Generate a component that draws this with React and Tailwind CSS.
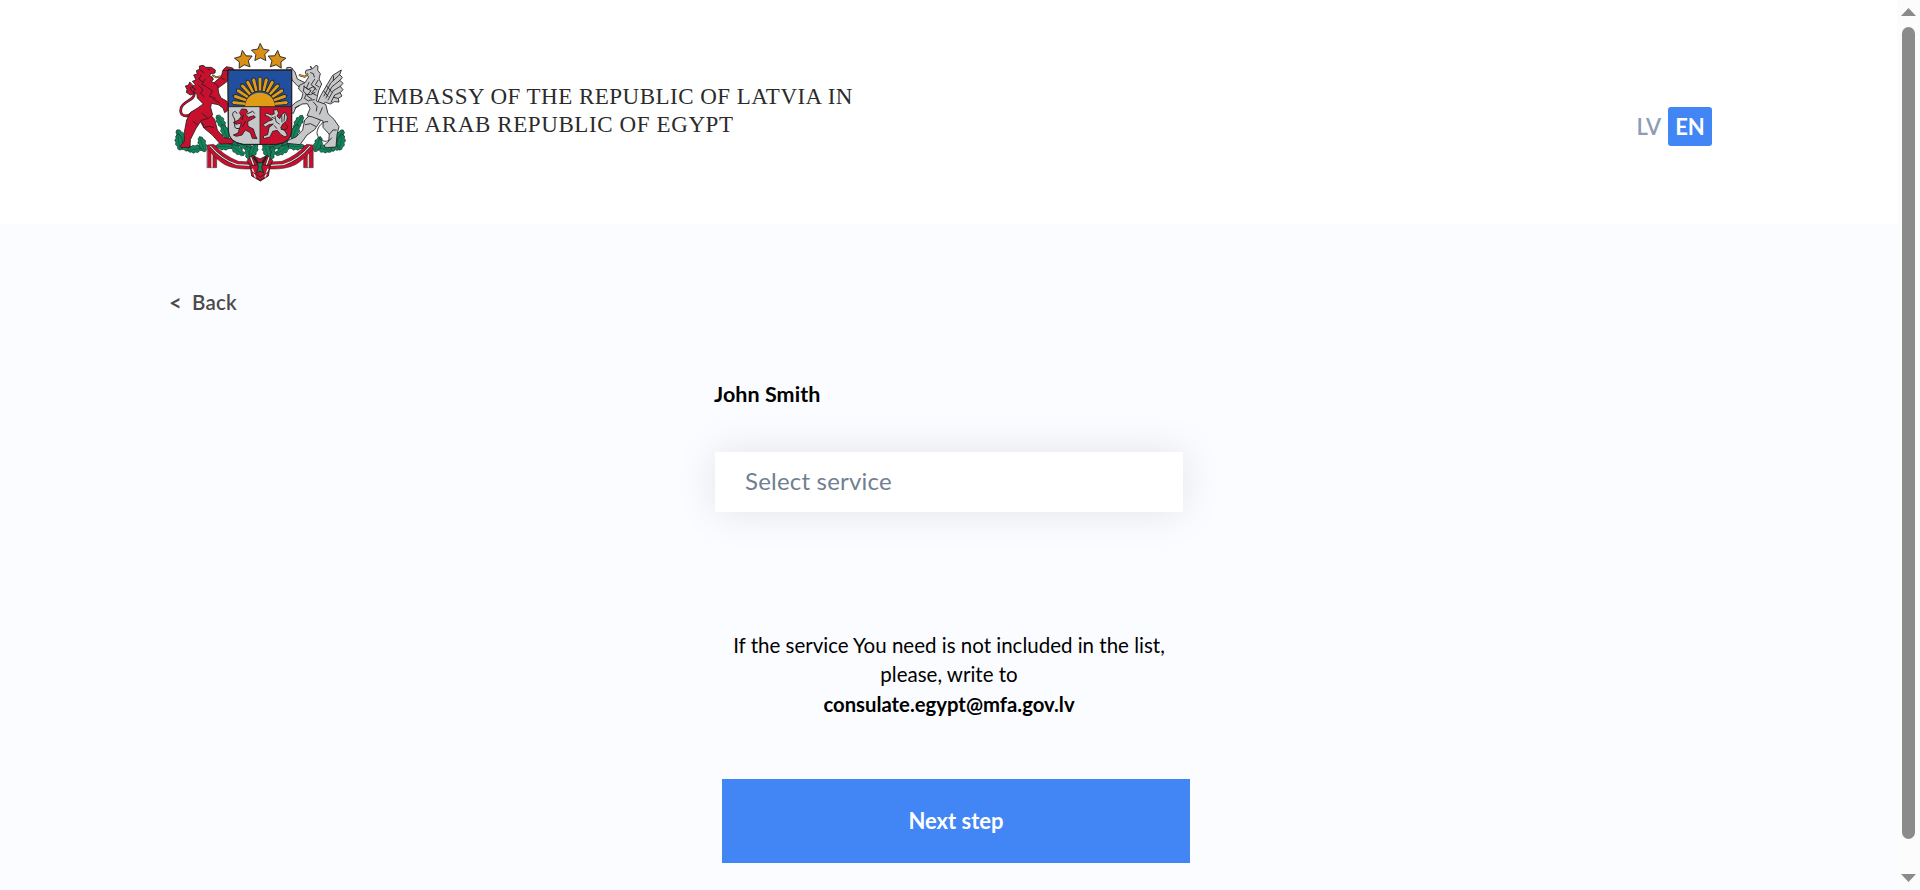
const OUTLINE = { stroke: '#241f20', strokeWidth: 2.6, strokeLinejoin: 'round', strokeLinecap: 'round' };
const STAR =
  'M0 -28 L8.500 -11.500 L26.600 -8.700 L13.500 4.500 L16.500 22.700 L0 14.500 L-16.500 22.700 L-13.500 4.500 L-26.600 -8.700 L-8.500 -11.500Z';
const LEAF =
  'M-24 0 Q-22 -11 -13 -8 Q-8 -17 0 -9 Q9 -15 12 -7 Q23 -8 24 1 Q20 10 11 7 Q5 15 -2 9 Q-10 15 -13 7 Q-22 9 -24 0Z';

const LEAVES = [
  [48, 306, 60], [62, 336, 20], [92, 342, -10], [112, 328, 70], [42, 322, 80],
  [168, 262, 60], [180, 292, 70], [200, 328, 10], [218, 346, 35], [240, 332, 20],
  [252, 358, 75], [265, 348, 110], [178, 334, 0],
  [522, 306, 120], [508, 336, 160], [478, 342, 10], [458, 328, 110], [528, 322, 100],
  [400, 262, 120], [390, 292, 110], [370, 328, 170], [352, 346, 145], [330, 332, 160],
  [318, 358, 105], [305, 348, 70], [394, 334, 0],
];

const RAYS = [-84, -70, -56, -42, -28, -14, 0, 14, 28, 42, 56, 70, 84];

function Lion() {
  return (
    <g {...OUTLINE} fill="#c8102e">
      <path
        d="M82 233 C62 252 43 240 48 220 C53 198 90 196 88 176 C87 163 77 160 72 168"
        fill="none"
        strokeWidth="8"
      />
      <path
        d="M82 233 C62 252 43 240 48 220 C53 198 90 196 88 176 C87 163 77 160 72 168"
        fill="none"
        stroke="#c8102e"
        strokeWidth="5"
      />
      <path d="M74 142 L70 151 L61 153 L66 163 L64 172 L76 180 L88 176 L93 166 L86 154Z" />
      <path d="M145 145 L169 124 L174 105 L184 95 L203 99 L207 105 L198 112 L188 119 L187 139 L158 160Z" />
      <path d="M132 235 L149 253 L157 285 L176 308 L200 311 L208 319 L202 326 L166 327 L142 300 L118 280 L102 253Z" />
      <path d="M104 93 L115 91 L122 97 L139 97 L151 105 L150 114 L139 116 L132 121 L143 127 L145 134 L139 139 L158 151 L161 174 L168 189 L185 198 L193 211 L190 225 L179 233 L174 219 L160 209 L139 205 L137 218 L143 240 L130 250 L109 256 L92 282 L76 314 L75 337 L48 338 L47 331 L58 319 L58 292 L65 255 L77 232 L98 219 L115 207 L97 189 L96 177 L82 170 L92 163 L80 156 L91 149 L82 139 L93 135 L86 120 L97 117 L94 107 L103 103Z" />
      <path
        d="M106 105 L117 113 M108 120 L102 133 L113 140 M121 132 L111 148 L124 155 M101 151 L114 165 L106 175 L118 185 M127 157 L142 168 L134 184 L151 190 M144 192 L164 204 M111 235 L126 247 M84 259 L97 269 M169 128 L179 135 M177 107 L195 105 M75 157 L80 168 M129 104 L135 104 M113 264 L116 278 L132 274 L146 278"
        fill="none"
      />
      <path d="M143 121 L153 127 L166 124" fill="none" stroke="#241f20" strokeWidth="5" />
      <path d="M143 121 L153 127 L166 124" fill="none" stroke="#d99a1e" strokeWidth="3" />
    </g>
  );
}

function Griffin() {
  return (
    <g {...OUTLINE} fill="#c6c7c9">
      <path d="M454 211 L467 182 L488 146 L503 121 L529 105 L524 119 L532 127 L525 136 L534 145 L526 154 L534 164 L525 173 L531 183 L520 190 L522 201 L508 200 L496 207 L481 202 L468 211Z" />
      <path
        d="M524 119 L497 144 L477 183 M525 136 L501 155 L483 189 M526 154 L505 167 L489 195 M525 173 L509 180 L498 202 M519 190 L506 187 M485 153 L500 171 M477 169 L489 184 M506 123 L505 136"
        fill="none"
      />
      <path d="M424 145 L397 132 L390 111 L378 97 L365 98 L366 106 L377 113 L381 135 L397 152 L417 165Z" />
      <path d="M438 238 L419 255 L413 285 L393 306 L369 316 L365 325 L405 329 L426 300 L449 284 L466 258Z" />
      <path d="M437 94 L443 101 L453 91 L459 94 L458 106 L466 116 L462 132 L470 147 L461 167 L454 198 L482 208 L489 236 L507 253 L522 275 L516 299 L513 336 L481 338 L478 330 L491 319 L493 298 L474 277 L474 258 L443 246 L426 242 L435 221 L427 206 L411 207 L392 219 L385 235 L376 233 L379 214 L391 203 L409 193 L414 175 L401 162 L403 151 L420 143 L431 126 L421 114 L423 106 L438 103Z" />
      <path
        d="M418 153 L415 168 L424 178 L418 190 L430 198 M432 142 L424 160 L438 167 L426 182 L440 192 M449 133 L438 149 L452 159 L440 174 L454 181 M459 136 L451 149 L462 156 M416 154 L430 163 L444 155 L455 165 M423 178 L437 179 L450 172 M432 196 L448 194 M437 113 L445 116 L448 126 M445 201 L456 214 L454 228 M472 218 L464 237 M488 260 C474 257 458 274 456 292 C457 317 486 329 500 309 M493 298 L504 285 L514 285 M421 269 L436 266 L452 274 M383 101 L372 107 M390 218 L402 212"
        fill="none"
      />
      <path d="M427 118 L420 125 L404 121" fill="none" strokeWidth="6" />
      <path d="M427 118 L420 125 L404 121" fill="none" stroke="#d99a1e" strokeWidth="3.500" />
    </g>
  );
}

function CoatOfArms() {
  return (
    <svg viewBox="0 0 570 465" className="h-[155px] w-[190px] shrink-0" aria-label="Coat of arms of Latvia">
      {LEAVES.map(([x, y, r], i) => (
        <g key={i} transform={`translate(${x} ${y}) rotate(${r})`}>
          <path d={LEAF} fill="#11845b" {...OUTLINE} strokeWidth="1.500" />
          <path d="M-19 0 L19 1" stroke="#0a4a35" strokeWidth="1.500" />
        </g>
      ))}
      {[false, true].map((flip) => (
        <g key={String(flip)} transform={flip ? 'translate(571 0) scale(-1 1)' : undefined}>
          <path d="M127 332 H155 V398 H127Z" fill="#c8102e" {...OUTLINE} strokeWidth="1.500" />
          <path d="M141 337 V398" stroke="#231f20" strokeWidth="7" />
          <path d="M141 337 V398" stroke="#d6d4d4" strokeWidth="5" />
          <path
            d="M128 330 L146 328 Q178 363 220 379 L258 381 L260 402 Q210 404 182 390 Q158 378 128 342Z"
            fill="#c8102e"
            {...OUTLINE}
            strokeWidth="1.500"
          />
          <path d="M136 333 Q171 375 216 389 L258 391" fill="none" stroke="#231f20" strokeWidth="6" />
          <path d="M136 333 Q171 375 216 389 L258 391" fill="none" stroke="#eeeeee" strokeWidth="3.500" />
        </g>
      ))}
      <Lion />
      <Griffin />
      <path d="M190 105 H380 V286 Q380 322 335 328 H235 Q190 322 190 286Z" fill="#1f4f9e" {...OUTLINE} strokeWidth="3" />
      <path d="M191 215 H285 V327 H235 Q191 321 191 286Z" fill="#c6c7c9" />
      <path d="M285 215 H379 V286 Q379 321 335 327 H285Z" fill="#c8102e" />
      {RAYS.map((a) => (
        <path
          key={a}
          transform={`translate(285 211) rotate(${a})`}
          d="M-5 -43 L-6 -80 L0 -86 L6 -80 L5 -43Z"
          fill="#e09c16"
          stroke="#242832"
          strokeWidth="2.800"
        />
      ))}
      <path d="M240 215 C241 159 329 159 330 215Z" fill="#e09c16" />
      <path d="M190 215 H380 M285 215 V328" {...OUTLINE} />
      <path
        d="M231 222 L244 223 L248 231 L241 237 L250 247 L267 242 L271 247 L257 255 L248 260 L249 274 L265 282 L271 301 L276 311 L262 310 L256 293 L241 285 L231 300 L214 304 L205 300 L219 294 L225 276 L229 264 L214 268 L205 263 L222 254 L229 243 L224 234Z"
        fill="#c8102e"
        {...OUTLINE}
      />
      <path d="M222 281 C197 283 217 260 206 247 C197 234 211 222 216 235 M235 240 L231 254 M246 237 L263 229 L268 234 M241 260 L233 274" fill="none" {...OUTLINE} strokeWidth="3" />
      <path
        d="M327 225 L337 224 L341 235 L336 243 L344 251 L349 240 L360 231 L367 245 L365 258 L353 267 L347 279 L360 288 L367 301 L360 306 L348 299 L337 286 L323 289 L315 306 L296 311 L295 303 L308 299 L312 278 L325 267 L312 269 L301 276 L294 269 L311 258 L323 254 L311 245 L300 241 L303 234 L320 240 L327 237Z"
        fill="#c6c7c9"
        {...OUTLINE}
      />
      <path d="M350 240 L351 261 M359 237 L357 258 M330 244 L333 260 L343 267 M348 283 C368 288 374 274 362 269 M328 272 L335 280 M321 247 L328 250" fill="none" {...OUTLINE} />
      <path d="M190 105 H380 V286 Q380 322 335 328 H235 Q190 322 190 286Z" fill="none" {...OUTLINE} strokeWidth="3" />
      {[
        [236, 75, -7],
        [286, 54, 0],
        [335, 75, 7],
      ].map(([x, y, r]) => (
        <path key={x} d={STAR} transform={`translate(${x} ${y}) rotate(${r})`} fill="#d99019" {...OUTLINE} />
      ))}
      <path d="M262 361 L285 372 L307 361 L323 377 L315 394 L310 423 L286 438 L260 423 L256 394 L247 378Z" fill="#c8102e" {...OUTLINE} />
      <path d="M257 367 L266 390 M312 367 L304 390 M266 365 L279 385 M304 365 L292 385" stroke="#241f20" strokeWidth="7" />
      <path d="M257 367 L266 390 M312 367 L304 390 M262 401 L272 429 M309 401 L299 429" stroke="#e9e7e7" strokeWidth="4" />
      <path d="M258 391 L276 390 M295 390 L314 391 M263 412 L286 426 L309 412 M272 427 L286 437 L300 427" fill="none" {...OUTLINE} />
      <path d="M278 383 L294 383 L290 397 L296 414 L286 408 L275 414 L280 397Z" fill="#11845b" {...OUTLINE} />
    </svg>
  );
}

function Scrollbar() {
  return (
    <div className="flex h-full w-[23px] shrink-0 flex-col items-center bg-[#fcfcfc] pt-2 pb-2">
      <svg viewBox="0 0 15 8" className="h-2 w-[15px]">
        <path d="M7.500 0 L15 8 H0Z" fill="#8b8b8b" />
      </svg>
      <div className="mt-[11px] h-[812px] w-[13px] rounded-full bg-[#8b8b8b]" />
      <svg viewBox="0 0 15 8" className="mt-auto h-2 w-[15px]">
        <path d="M0 0 H15 L7.500 8Z" fill="#8b8b8b" />
      </svg>
    </div>
  );
}

export default function App() {
  return (
    <div className="flex h-[890px] w-full overflow-hidden bg-[#fbfcff] font-['Lato',sans-serif] text-black">
      <div className="flex min-w-0 flex-1 flex-col">
        <header className="flex h-[224px] shrink-0 bg-white pt-[35px] pl-[165px]">
          <CoatOfArms />
          <h1 className="mt-[48px] ml-[18px] w-[500px] font-['Liberation_Serif',serif] text-[23px] leading-[28px] tracking-[0.48px] whitespace-nowrap text-[#2b2b2b]">
            <span className="block">EMBASSY OF THE REPUBLIC OF LATVIA IN</span>
            <span className="block tracking-[0.6px]">THE ARAB REPUBLIC OF EGYPT</span>
          </h1>
          <nav className="mt-[72px] mr-[185px] ml-auto flex h-[39px] items-center text-[22px]">
            <a className="mr-[7px] font-semibold text-[#8d9db5]">LV</a>
            <a className="flex h-[39px] w-[44px] items-center justify-center rounded-[3px] bg-[#4285f4] font-bold text-white">EN</a>
          </nav>
        </header>

        <a className="mt-[63px] ml-[169px] flex h-[30px] items-center text-[20.5px] font-semibold tracking-[0.2px] text-[#4a4a4a]">
          <span className="w-[23px] text-[22px] font-bold">&lt;</span>
          <span>Back</span>
        </a>

        <main className="ml-[715px] flex w-[468px] flex-col">
          <h2 className="mt-[62px] -ml-px h-[30px] text-[21.5px] leading-[30px] font-bold tracking-[0.05px]">John Smith</h2>
          <div className="mt-[43px] flex h-[60px] items-center bg-white pb-[2px] pl-[30px] text-[24px] tracking-[0.2px] text-[#708090] shadow-[0_0_40px_rgba(0,0,0,0.1)]">
            <span>Select service</span>
          </div>
          <p className="mt-[119px] text-center text-[20.5px] leading-[29.3px]">
            <span className="block">If the service You need is not included in the list,</span>
            <span className="block">please, write to</span>
            <span className="block text-[20.3px] font-bold">consulate.egypt@mfa.gov.lv</span>
          </p>
          <button className="mt-[60px] ml-[7px] h-[84px] w-[468px] shrink-0 bg-[#4285f4] text-[22px] font-bold text-white">Next step</button>
        </main>
      </div>
      <Scrollbar />
    </div>
  );
}
